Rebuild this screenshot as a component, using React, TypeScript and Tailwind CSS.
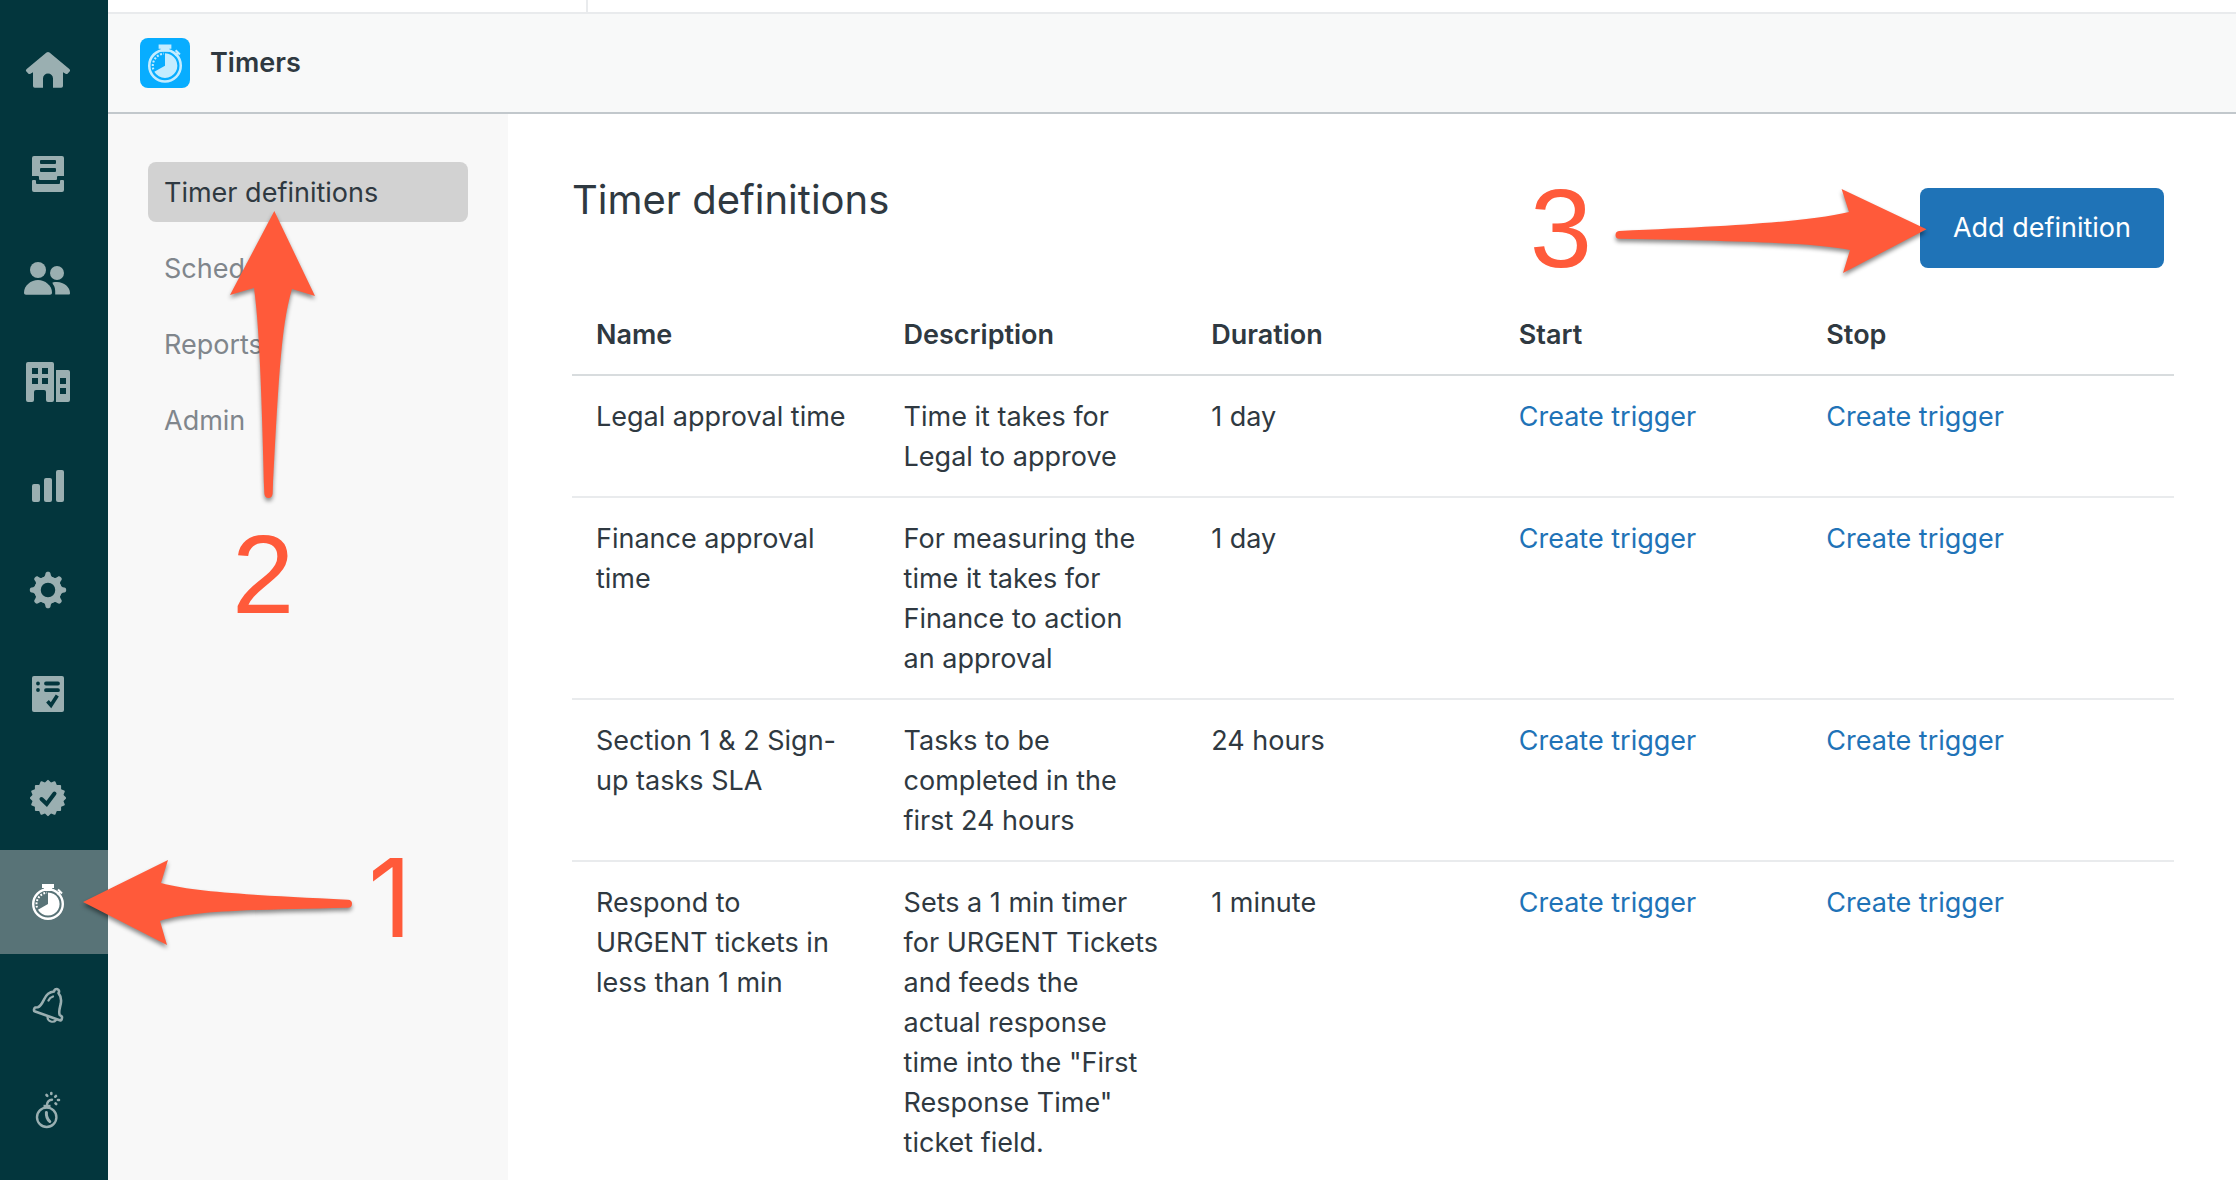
import type { ReactNode } from "react";

type Definition = {
  name: string;
  description: string;
  duration: string;
};

const definitions: Definition[] = [
  {
    name: "Legal approval time",
    description: "Time it takes for Legal to approve",
    duration: "1 day",
  },
  {
    name: "Finance approval time",
    description:
      "For measuring the time it takes for Finance to action an approval",
    duration: "1 day",
  },
  {
    name: "Section 1 & 2 Sign-up tasks SLA",
    description: "Tasks to be completed in the first 24 hours",
    duration: "24 hours",
  },
  {
    name: "Respond to URGENT tickets in less than 1 min",
    description:
      'Sets a 1 min timer for URGENT Tickets and feeds the actual response time into the "First Response Time" ticket field.',
    duration: "1 minute",
  },
];

const gearTeeth = [0, 45, 90, 135, 180, 225, 270, 315];
const badgeTeeth = [0, 22.5, 45, 67.5];

function Stopwatch() {
  return (
    <>
      <path d="M20 8h12v4h-2v3h-8v-3h-2z" fill="currentColor" />
      <path d="M35.5 18.5l3-3M36 13.5l4 4" stroke="currentColor" strokeWidth="2" />
      <circle cx="26" cy="28" r="14.8" fill="none" stroke="currentColor" strokeWidth="2.4" />
      <path d="M26 28V16.4a11.6 11.6 0 1 1-10.05 17.4z" fill="currentColor" />
      <path
        d="M15 31.5a11.5 11.5 0 0 1 10-14.8"
        fill="none"
        stroke="currentColor"
        strokeWidth="2"
        strokeDasharray="1.8 1.5"
      />
    </>
  );
}

const railItems: { label: string; icon: ReactNode }[] = [
  {
    label: "Home",
    icon: (
      <path
        d="M24.5 8.6a2.4 2.4 0 0 1 3 0L47.3 25c1 .9 1 1.8.3 2.6l-1.8 1.9c-.8.8-1.7.8-2.6.1L41 28.2V42a1.8 1.8 0 0 1-1.8 1.8H31V34.5a5 5 0 0 0-10 0v9.3h-8.2A1.8 1.8 0 0 1 11 42V28.2l-2.2 1.4c-.9.7-1.8.7-2.6-.1l-1.8-1.9c-.7-.8-.7-1.7.3-2.6z"
        fill="currentColor"
      />
    ),
  },
  {
    label: "Views",
    icon: (
      <>
        <path
          fillRule="evenodd"
          d="M12 8h28a2 2 0 0 1 2 2v18h-6a1 1 0 0 0-1 1v2a1 1 0 0 1-1 1H18a1 1 0 0 1-1-1v-2a1 1 0 0 0-1-1h-6V10a2 2 0 0 1 2-2zM19 12a1 1 0 0 0-1 1v2a1 1 0 0 0 1 1h14a1 1 0 0 0 1-1v-2a1 1 0 0 0-1-1zM19 20a1 1 0 0 0-1 1v2a1 1 0 0 0 1 1h14a1 1 0 0 0 1-1v-2a1 1 0 0 0-1-1z"
          fill="currentColor"
        />
        <path
          d="M11 32h2a1 1 0 0 1 1 1v2a1 1 0 0 0 1 1h22a1 1 0 0 0 1-1v-2a1 1 0 0 1 1-1h2a1 1 0 0 1 1 1v9a2 2 0 0 1-2 2H12a2 2 0 0 1-2-2v-9a1 1 0 0 1 1-1z"
          fill="currentColor"
        />
      </>
    ),
  },
  {
    label: "Customers",
    icon: (
      <g fill="currentColor">
        <circle cx="16" cy="18" r="8" />
        <circle cx="35" cy="21" r="7" />
        <path d="M2 40.5C2 33.5 9 28 16 28s14 5.5 14 12.5c0 1.5-.8 2.2-2 2.2H4c-1.2 0-2-.7-2-2.2z" />
        <path d="M30.5 30.5c1.5-.4 3-.5 4.5-.5 7 0 13 5 13 11 0 1-.4 1.5-1.5 1.5H33.2V39c0-3.5-1.2-5.5-2.4-7z" />
      </g>
    ),
  },
  {
    label: "Organizations",
    icon: (
      <path
        fillRule="evenodd"
        d="M6 6h24a2 2 0 0 1 2 2v36a2 2 0 0 1-2 2h-4a2 2 0 0 1-2-2V36a2 2 0 0 0-2-2h-8a2 2 0 0 0-2 2v8a2 2 0 0 1-2 2H6a2 2 0 0 1-2-2V8a2 2 0 0 1 2-2zM10 12v6h6v-6zM20 12v6h6v-6zM10 22v6h6v-6zM20 22v6h6v-6zM34 14h12a2 2 0 0 1 2 2v28a2 2 0 0 1-2 2H34zM38 22v6h6v-6zM38 32v6h6v-6z"
        fill="currentColor"
      />
    ),
  },
  {
    label: "Reporting",
    icon: (
      <g fill="currentColor">
        <rect x="10" y="24" width="8" height="18" rx="2" />
        <rect x="22" y="18" width="8" height="24" rx="2" />
        <rect x="34" y="10" width="8" height="32" rx="2" />
      </g>
    ),
  },
  {
    label: "Settings",
    icon: (
      <g fill="currentColor">
        <circle cx="26" cy="26" r="10.5" fill="none" stroke="currentColor" strokeWidth="6.5" />
        {gearTeeth.map((angle) => (
          <path
            key={angle}
            d="M20.5 14c2-.8 2.6-2 3-4.4.2-1.2 1-1.8 2.5-1.8s2.3.6 2.5 1.8c.4 2.4 1 3.6 3 4.4z"
            transform={`rotate(${angle} 26 26)`}
          />
        ))}
      </g>
    ),
  },
  {
    label: "Checklists",
    icon: (
      <>
        <rect x="10" y="8" width="32" height="36" rx="2" fill="currentColor" />
        <g stroke="#03363d" strokeLinecap="round" fill="none">
          <path d="M16 15.4v.1M16 22v.1M24 15.5h12M24 22.2h12" strokeWidth="3.8" />
          <path d="M25.5 33.3l3.5 4 6.3-9.8" strokeWidth="3.6" strokeLinecap="butt" />
        </g>
      </>
    ),
  },
  {
    label: "Approvals",
    icon: (
      <>
        {badgeTeeth.map((angle) => (
          <rect
            key={angle}
            x="12.9"
            y="12.9"
            width="26.2"
            height="26.2"
            rx="1"
            fill="currentColor"
            transform={`rotate(${angle} 26 26)`}
          />
        ))}
        <path
          d="M19.5 27l5.2 5 7.8-10.5"
          fill="none"
          stroke="#03363d"
          strokeWidth="4"
          strokeLinecap="round"
        />
      </>
    ),
  },
  { label: "Timers", icon: <Stopwatch /> },
  {
    label: "Notifications",
    icon: (
      <g fill="none" stroke="currentColor" strokeWidth="2.6" strokeLinecap="round" strokeLinejoin="round">
        <path d="M32 11.5c.3-2 2-3 3.500-2.300 1.600.6 2 2.300 1 3.900 2.500 3 3 6.500 2.300 10.500-1 4.400-2.600 8.500-1 11.400l2 1.500c.6.500-.2 4.300-1.300 4L12.500 31.300c-1-.4-.3-3.600.6-3.800l2.700-.2c3-1 4.500-4.300 6.200-7.800 2-4.500 5-7.500 10-8z" />
        <path d="M25.5 37.5c.3 4 6 5.800 8.500 2.500M26.500 20.500c.8-2 2.300-3.300 4.500-4" strokeWidth="2.2" />
      </g>
    ),
  },
  {
    label: "Time bombs",
    icon: (
      <g fill="none" stroke="currentColor" strokeWidth="2.4" strokeLinecap="round">
        <circle cx="24.7" cy="33.3" r="9.7" />
        <path d="M21.500 20.8h7v3.5h-7z" fill="currentColor" stroke="none" />
        <path d="M25 20.5c.4-3 2-4.500 5-4.800" />
        <path d="M24.4 28.5c-.3 4 .8 6.500 3.400 9" strokeWidth="3" />
        <path
          d="M24.5 11l.8.8M29.3 9v1M34 12l-.8.7M36 16h1M33.5 19.3l.7.7"
          strokeWidth="2.6"
        />
      </g>
    ),
  },
];

const navItems = ["Timer definitions", "Schedules", "Reports", "Admin"];

function Arrow({ d, className }: { d: string; className: string }) {
  return (
    <svg
      aria-hidden="true"
      className={`pointer-events-none absolute overflow-visible drop-shadow-[0_3px_2px_rgba(0,0,0,0.45)] ${className}`}
    >
      <path d={d} fill="#ff5a3a" />
    </svg>
  );
}

function SideRail() {
  return (
    <aside className="relative z-10 w-[108px] shrink-0 bg-[#03363d] pt-[18px]">
      {railItems.map((item) => {
        const active = item.label === "Timers";

        return (
          <div key={item.label} className="relative">
            <button
              aria-label={item.label}
              className={`flex h-[104px] w-full items-center justify-center pr-3 ${
                active ? "bg-[#587377] text-white" : "text-[#9aafb1]"
              }`}
            >
              <svg viewBox="0 0 52 52" className="size-[52px]">
                {item.icon}
              </svg>
            </button>

            {active && (
              <>
                <Arrow
                  className="left-[79px] top-[6px] h-[94px] w-[278px]"
                  d="M4 46L89 4L82 27C120 37 180 39 269 43.7Q273 44 273 47.7Q273 51.7 269 51.7C180 54 115 54 81 65L88 89Z"
                />
                <span className="absolute left-[368px] top-0 font-['Inter',sans-serif] text-[108px] leading-[96px] text-[#ff5a3a]">
                  1
                </span>
              </>
            )}
          </div>
        );
      })}
    </aside>
  );
}

function SubNav() {
  return (
    <nav className="relative w-[400px] shrink-0 bg-[#f8f8f8] px-10 pt-12">
      <ul className="flex flex-col gap-4">
        {navItems.map((item, index) => (
          <li key={item}>
            <a
              href="#"
              className={`block rounded-lg px-4 pb-[9px] pt-[11px] leading-10 ${
                index === 0 ? "bg-[#d2d2d2]" : "text-[#80868c]"
              }`}
            >
              {item}
            </a>
          </li>
        ))}
      </ul>

      <Arrow
        className="left-[118px] top-[94px] h-[294px] w-[94px]"
        d="M48.3 3L4 87L28 80C32 110 35 150 38.3 285Q38.5 290 42.5 290Q46.5 290 46.7 285C53 160 56 115 66 81L89 88Z"
      />
      <span className="absolute left-[124px] top-[406px] font-['Liberation_Sans',Arial,sans-serif] text-[112px] leading-[110px] text-[#ff5a3a]">
        2
      </span>
    </nav>
  );
}

function DefinitionTable() {
  return (
    <table className="mt-[26px] w-full table-fixed text-left">
      <thead>
        <tr className="border-b-2 border-[#d8dcde]">
          <th className="w-[19.2%] px-6 pb-[19px] pt-[21px] font-semibold">Name</th>
          <th className="w-[19.2%] px-6 pb-[19px] pt-[21px] font-semibold">Description</th>
          <th className="w-[19.2%] px-6 pb-[19px] pt-[21px] font-semibold">Duration</th>
          <th className="w-[19.2%] px-6 pb-[19px] pt-[21px] font-semibold">Start</th>
          <th className="px-6 pb-[19px] pt-[21px] font-semibold">Stop</th>
        </tr>
      </thead>
      <tbody>
        {definitions.map((definition) => (
          <tr key={definition.name} className="border-b-2 border-[#e9ebed] align-top">
            <td className="px-6 pb-[19px] pt-[21px]">{definition.name}</td>
            <td className="pb-[19px] pl-6 pr-7 pt-[21px]">{definition.description}</td>
            <td className="px-6 pb-[19px] pt-[21px]">{definition.duration}</td>
            <td className="px-6 pb-[19px] pt-[21px]">
              <a href="#" className="text-[#1f73b7]">
                Create trigger
              </a>
            </td>
            <td className="px-6 pb-[19px] pt-[21px]">
              <a href="#" className="text-[#1f73b7]">
                Create trigger
              </a>
            </td>
          </tr>
        ))}
      </tbody>
    </table>
  );
}

export default function App() {
  return (
    <div className="flex h-screen overflow-hidden bg-white font-['Inter',sans-serif] text-[27px] leading-10 text-[#2f3941]">
      <SideRail />

      <div className="flex min-w-0 flex-1 flex-col">
        {/* TAB STRIP */}
        <div className="flex h-[14px] shrink-0 border-b-2 border-[#e9ebed]">
          <div className="w-[480px] border-r-2 border-[#e9ebed]" />
        </div>

        {/* APP HEADER */}
        <header className="flex h-[100px] shrink-0 items-center gap-5 border-b-2 border-[#c2c8cc] bg-[#f8f9f9] px-8">
          <div className="size-[50px] rounded-lg bg-[#08adff] text-[#c4ecff]">
            <svg viewBox="2.5 2 47 47" className="size-full">
              <Stopwatch />
            </svg>
          </div>
          <h1 className="font-semibold">Timers</h1>
        </header>

        <div className="flex min-h-0 flex-1">
          <SubNav />

          <main className="min-w-0 flex-1 pl-16 pr-[62px] pt-[60px]">
            <div className="flex items-start justify-between pr-[10px] pt-[14px]">
              <h2 className="-mt-3 text-[40px] leading-[48px]">
                Timer definitions
              </h2>

              <div className="relative">
                <button className="h-20 rounded-lg bg-[#1f73b7] px-[33px] text-white">
                  Add definition
                </button>
                <span className="absolute right-[572px] top-[-14px] font-['Liberation_Sans',Arial,sans-serif] text-[112px] leading-[110px] text-[#ff5a3a]">
                  3
                </span>
                <Arrow
                  className="right-[233px] top-[-3px] h-[94px] w-[320px]"
                  d="M315.5 44.3L230.6 4L238 27C200 36 130 41 8 46Q4.5 46.4 4.5 50Q4.5 53.7 8 53.7C130 56 205 58 239 65L232 88Z"
                />
              </div>
            </div>

            <DefinitionTable />
          </main>
        </div>
      </div>
    </div>
  );
}
